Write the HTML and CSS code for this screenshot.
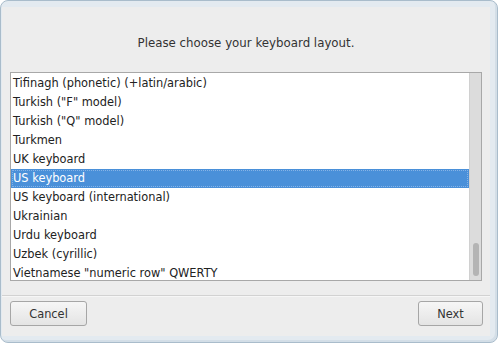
FILE: index.html
```html
<!DOCTYPE html>
<html lang="en">
  <head>
    <meta charset="UTF-8" />
    <title>Keyboard layout</title>
    <link rel="stylesheet" href="styles.css">
  </head>
  <body>
    <div class="window">
      <div class="dialog">
        <p class="prompt">Please choose your keyboard layout.</p>

        <div class="list">
          <ul class="rows">
            <li>Tifinagh (phonetic) (+latin/arabic)</li>
            <li>Turkish ("F" model)</li>
            <li>Turkish ("Q" model)</li>
            <li>Turkmen</li>
            <li>UK keyboard</li>
            <li class="selected">US keyboard</li>
            <li>US keyboard (international)</li>
            <li>Ukrainian</li>
            <li>Urdu keyboard</li>
            <li>Uzbek (cyrillic)</li>
            <li>Vietnamese "numeric row" QWERTY</li>
          </ul>
          <div class="scrollbar">
            <div class="thumb"></div>
          </div>
        </div>

        <div class="separator"></div>

        <div class="buttons">
          <button type="button" class="cancel">Cancel</button>
          <button type="button" class="next">Next</button>
        </div>
      </div>
    </div>
  </body>
</html>
```

FILE: styles.css
```css
body {
  margin: 0;
  background: #ffffff;
  font-family: "DejaVu Sans", sans-serif;
  font-size: 11.4px;
  color: #222;
}
.window {
  width: 498px;
  height: 343px;
  box-sizing: border-box;
  border: 1px solid #a9bccb;
  border-radius: 8px;
  background: #e3eaf0;
  padding: 6px 7px 6px 1px;
  box-shadow: inset -2px -2px 0 #d3dee7;
}
.dialog {
  height: 100%;
  background: #ededed;
  display: flex;
  flex-direction: column;
  padding: 0 8px;
  box-sizing: border-box;
}
.prompt {
  margin: 30px 0 0;
  height: 35px;
  line-height: 13px;
  text-align: center;
  font-size: 11.8px;
  color: #333;
}
.list {
  height: 209px;
  box-sizing: border-box;
  border: 1px solid #a8a8a8;
  background: #fff;
  display: flex;
}
.rows {
  flex: 1;
  list-style: none;
  margin: 0;
  padding: 1px 0 0;
  overflow: hidden;
}
.rows li {
  height: 19px;
  line-height: 19px;
  padding-left: 2px;
  white-space: nowrap;
  box-sizing: border-box;
}
.rows li.selected {
  background: #4a90d9;
  color: #fff;
  outline: 1px dotted #86b3e6;
  outline-offset: -2px;
}
.scrollbar {
  width: 12px;
  background: #dcdcdc;
  border-left: 1px solid #d0d0d0;
  box-sizing: border-box;
  display: flex;
  flex-direction: column;
  justify-content: flex-end;
  align-items: center;
  padding-bottom: 4px;
}
.thumb {
  width: 6px;
  height: 33px;
  border-radius: 3px;
  background: #b4b4b4;
}
.separator {
  margin-top: 14px;
  height: 1px;
  background: #d2d2d2;
  border-bottom: 1px solid #f6f6f6;
  margin-left: -8px;
  margin-right: -8px;
}
.buttons {
  margin-top: 4px;
  display: flex;
  justify-content: space-between;
}
button {
  height: 25px;
  font-family: "DejaVu Sans", sans-serif;
  font-size: 11.4px;
  color: #333;
  border: 1px solid #a6a6a6;
  border-radius: 3px;
  background: linear-gradient(to bottom, #f6f6f6, #e4e4e4);
  padding: 0;
}
.cancel {
  width: 77px;
}
.next {
  width: 65px;
  margin-right: -1px;
}
```
